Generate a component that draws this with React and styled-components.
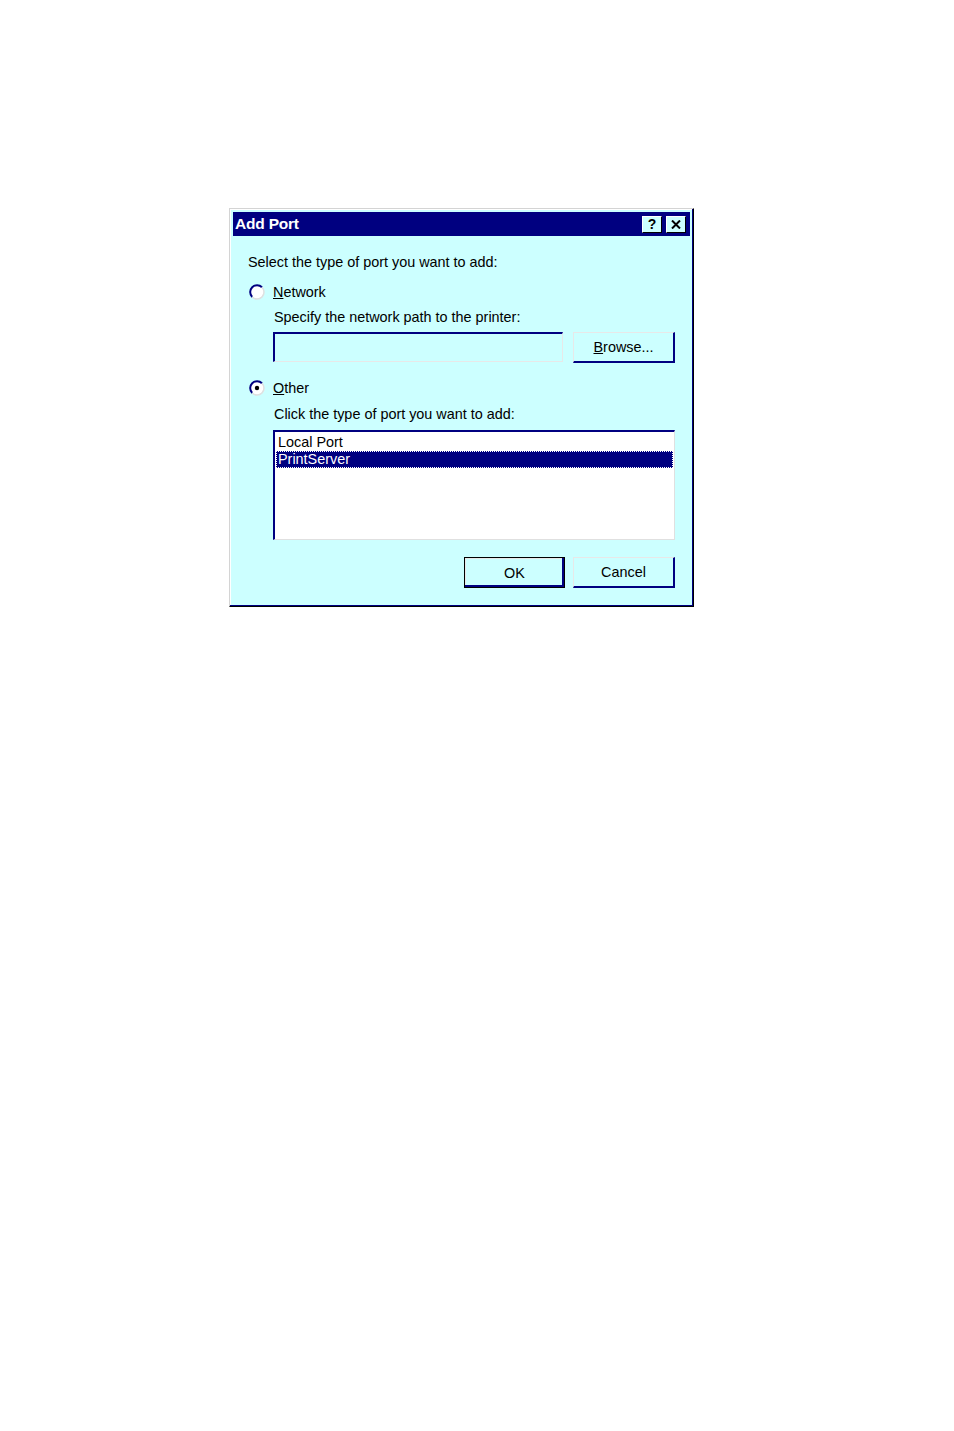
import styled, { createGlobalStyle } from "styled-components"

const Global = createGlobalStyle`
body{
margin:0;
background:#ffffff;
font-family:"Liberation Sans", Arial, sans-serif;
}
`

const Page = styled.div`
width:954px;
height:1431px;
padding:208px 0 0 229px;
box-sizing:border-box;
`

const Window = styled.div`
width:465px;
height:399px;
box-sizing:border-box;
background:#ccffff;
border-top:1px solid #d4d4d4;
border-left:1px solid #d4d4d4;
border-right:1px solid #000000;
border-bottom:1px solid #000000;
box-shadow: inset -1px -1px 0 #000080, inset 1px 1px 0 #ffffff;
padding:3px 3px 0 3px;
display:flex;
flex-direction:column;
`

const TitleBar = styled.div`
height:24px;
background:#000080;
display:flex;
align-items:center;
justify-content:space-between;
padding:0 4px 0 2px;
`

const TitleText = styled.span`
color:#ffffff;
font-weight:bold;
font-size:15.5px;
letter-spacing:-0.2px;
`

const TitleButtons = styled.div`
display:flex;
gap:4px;
`

const TitleBtn = styled.div`
width:20px;
height:17px;
box-sizing:border-box;
background:#ccffff;
border-top:1px solid #ffffff;
border-left:1px solid #ffffff;
border-right:1px solid #000000;
border-bottom:1px solid #000000;
display:flex;
align-items:center;
justify-content:center;
font-weight:bold;
font-size:14px;
color:#000;
`

const Body = styled.div`
padding:0 0 0 15px;
display:flex;
flex-direction:column;
`

const Text = styled.div`
font-size:14.4px;
line-height:16px;
color:#000;
margin-left:${p => p.$indent ? "26px" : "0"};
margin-top:${p => p.$top || 0}px;
`

const RadioRow = styled.div`
display:flex;
align-items:center;
gap:8px;
margin-top:${p => p.$top || 0}px;
margin-left:1px;
font-size:14.4px;
line-height:16px;
`

const FieldRow = styled.div`
display:flex;
gap:10px;
margin-left:25px;
margin-top:${p => p.$top || 0}px;
`

const PathInput = styled.div`
width:290px;
height:30px;
box-sizing:border-box;
border-top:2px solid #000080;
border-left:2px solid #000080;
border-right:1px solid #e8e8e8;
border-bottom:1px solid #e8e8e8;
background:#ccffff;
`

const Button = styled.div`
width:${p => p.$w || 102}px;
height:31px;
box-sizing:border-box;
background:#ccffff;
font-size:14.4px;
display:flex;
align-items:center;
justify-content:center;
border-top:1px solid #e8e8e8;
border-left:1px solid #e8e8e8;
border-right:2px solid #000080;
border-bottom:2px solid #000080;
${p => p.$default && `
border:1px solid #000;
box-shadow: inset -2px -2px 0 #000080, inset 1px 1px 0 #e8e8e8;
`}
`

const ListBox = styled.div`
width:402px;
height:110px;
box-sizing:border-box;
margin-left:25px;
margin-top:${p => p.$top || 0}px;
background:#ffffff;
border-top:2px solid #000080;
border-left:2px solid #000080;
border-right:1px solid #e0e0e0;
border-bottom:1px solid #e0e0e0;
padding:2px 1px 0 1px;
`

const Item = styled.div`
height:17px;
line-height:17px;
font-size:14.4px;
padding-left:2px;
box-sizing:border-box;
color:${p => p.$selected ? "#fff" : "#000"};
background:${p => p.$selected ? "#000080" : "transparent"};
${p => p.$selected && `outline:1px dotted #ffffff; outline-offset:-1px;`}
`

const Footer = styled.div`
display:flex;
justify-content:flex-end;
gap:8px;
margin-top:17px;
padding-right:15px;
`

function Radio({ checked }) {
  return (
    <svg width="16" height="16" viewBox="0 0 16 16">
      <circle cx="8" cy="8" r="6.5" fill="#ffffff" />
      <path d="M13 3.2 A6.5 6.5 0 0 0 3.2 13" fill="none" stroke="#000080" strokeWidth="2" />
      <path d="M3.2 13 A6.5 6.5 0 0 0 13 3.2" fill="none" stroke="#e0e0e0" strokeWidth="1.5" />
      {checked && <circle cx="8" cy="8" r="2.2" fill="#000" />}
    </svg>
  )
}

function App() {
  return (
    <Page>
      <Global />
      <Window>
        <TitleBar>
          <TitleText>Add Port</TitleText>
          <TitleButtons>
            <TitleBtn>?</TitleBtn>
            <TitleBtn>
              <svg width="10" height="9" viewBox="0 0 10 9">
                <path d="M1 0.5 L9 8.5 M9 0.5 L1 8.5" stroke="#000" strokeWidth="2" />
              </svg>
            </TitleBtn>
          </TitleButtons>
        </TitleBar>
        <Body>
          <Text $top={18}>Select the type of port you want to add:</Text>
          <RadioRow $top={14}>
            <Radio />
            <span><u>N</u>etwork</span>
          </RadioRow>
          <Text $indent $top={9}>Specify the network path to the printer:</Text>
          <FieldRow $top={7}>
            <PathInput />
            <Button $w={102}><span><u>B</u>rowse...</span></Button>
          </FieldRow>
          <RadioRow $top={17}>
            <Radio checked />
            <span><u>O</u>ther</span>
          </RadioRow>
          <Text $indent $top={10}>Click the type of port you want to add:</Text>
          <ListBox $top={8}>
            <Item>Local Port</Item>
            <Item $selected>PrintServer</Item>
          </ListBox>
          <Footer>
            <Button $default $w={101}>OK</Button>
            <Button $w={102}>Cancel</Button>
          </Footer>
        </Body>
      </Window>
    </Page>
  )
}

export default App
